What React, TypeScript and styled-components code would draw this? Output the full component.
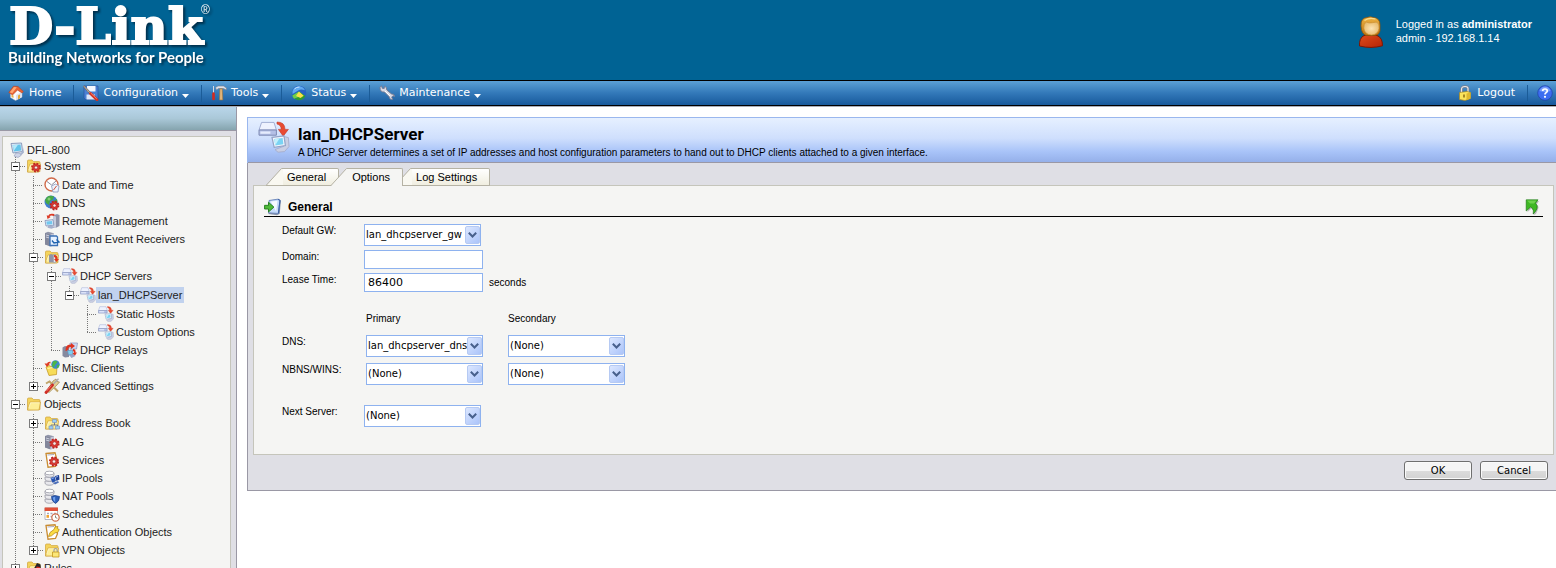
import React from "react";
import styled, { createGlobalStyle, css } from "styled-components";

const sans = '"Liberation Sans", Arial, sans-serif';
const wide = '"DejaVu Sans", Verdana, sans-serif';

const GlobalStyle = createGlobalStyle`
  * { box-sizing: border-box; }
  html, body { margin: 0; padding: 0; }
  body { background: #fff; color: #000; font: 11px/14px ${sans}; }
  button, input, select { font: inherit; color: inherit; margin: 0; }
`;

/* ---------- icon parts ---------- */

const Gear = ({ x = 10, y = 10, r = 4 }: { x?: number; y?: number; r?: number }) => (
  <g>
    <circle cx={x} cy={y} r={r} fill="none" stroke="#c02622" strokeWidth="2.200" strokeDasharray={`${r * 0.45} ${r * 0.335}`} />
    <circle cx={x} cy={y} r={r - 0.2} fill="#dd3b34" stroke="#b01c18" strokeWidth=".5" />
    <circle cx={x} cy={y} r={r * 0.42} fill="#f6ebe9" stroke="#8d1210" strokeWidth=".5" />
  </g>
);

const FolderShape = () => (
  <g stroke="#cfa23a" strokeWidth=".7">
    <path d="M1.500 14V3q0-1 1-1h3.500l1.500 1.600h5.500q1 0 1 1v9z" fill="#f4d45c" />
    <path d="M1.500 14 4 6h10.500l-1.500 8z" fill="#fdee96" />
    <path d="M2.800 12 4.500 6.800h9" fill="none" stroke="#fffbd6" />
  </g>
);

const ServerShape = () => (
  <g>
    <path d="M1 2 4 .7l6 1.500v12.300l-3 .8-6-2z" fill="#9397ab" />
    <path d="M1 2l5.500 1.500v12L1 13.500z" fill="#83879b" />
    <path d="M2 4l3.500 1M2 6l3.500 1" stroke="#d5d8e6" strokeWidth=".9" />
    <path d="M6.500 3.500 10 2.200v12.300l-3.500 1z" fill="#c5c8d8" />
  </g>
);

const MonitorShape = () => (
  <g>
    <path d="M2 1.500 12.500 1l1 8.500-9.500 1.500z" fill="#dfe7f5" stroke="#8295b8" strokeWidth=".9" />
    <path d="M3.500 3l8-.5.7 6-7.200 1z" fill="#62c4ea" />
    <path d="M3.700 3.200 9 2.700 5 8.500z" fill="#b4e9fa" />
    <path d="M13.500 2.500l1.500 8-3 3-1-2.500 3-1.500z" fill="#a7b3cf" />
    <path d="M7 11h3.500l1.500 2.500-3 2-4-1.500z" fill="#cfd5e8" stroke="#99a3c0" strokeWidth=".7" />
  </g>
);

const ServerToClient = () => (
  <g>
    <path d="M.5 4.500 1.800.7H8L9.200 4.500z" fill="#eef2fe" stroke="#a3afd4" strokeWidth=".5" />
    <path d="M.5 4.500h8.700v2.600H.5z" fill="#b4c0e6" stroke="#7e8ab4" strokeWidth=".5" />
    <path d="M1.200 5.200h5v1.200h-5z" fill="#e6ecfd" />
    <path d="M9.500.5q4 0 4 3.700h1.700L12.600 7.600 10.200 4.200h1.400q0-2.200-2.100-2.700z" fill="#e84a32" stroke="#c43a26" strokeWidth=".3" />
    <path d="M13.200 7.800l2 .5.3 4.500-2.300 2.500-3.200.3-1.500-1.300 4.500-1.700z" fill="#c9cfe4" stroke="#a3aac6" strokeWidth=".4" />
    <path d="M7 8.200l6-.7.7 4.800-5.600.9z" fill="#f3f6fd" stroke="#93a3c6" strokeWidth=".6" />
    <path d="M8 9l4.300-.5.4 3.100-4 .6z" fill="#7bd3f3" />
    <path d="M8.100 9.100l2.600-.3-2 3.200z" fill="#c2effc" />
  </g>
);

const Sheet = () => (
  <g>
    <path d="M2 1.500 11 .8l2.500 9-2 4.700-7.500.7z" fill="#fff" stroke="#c98c32" strokeWidth="1.300" />
    <path d="M3.500 3 10 2.500" stroke="#aab" strokeWidth="1" />
  </g>
);

const Discs = () => (
  <g fill="#e9e9ed" stroke="#8d8e99" strokeWidth=".7">
    <path d="M1 11v2c0 3 9 3 9 0v-2z" />
    <path d="M1 7v2c0 3 9 3 9 0V7z" />
    <path d="M1 3v2c0 3 9 3 9 0V3z" />
    <ellipse cx="5.500" cy="3" rx="4.500" ry="1.800" fill="#fff" />
  </g>
);

const icons = {
  monitor: <MonitorShape />,
  folder: <FolderShape />,
  folderGear: <g><FolderShape /><Gear x={10} y={9.5} r={3.8} /></g>,
  clock: (
    <g>
      <circle cx="7.500" cy="7.500" r="6.500" fill="#fff" stroke="#d06a4a" strokeWidth="1.400" />
      <path d="M3 4.500l4.500 3.500L12 4" fill="none" stroke="#8c8c9c" strokeWidth="1" />
      <path d="M7.500 9l4-2 3.500 2-1 6H9z" fill="#eef2fb" stroke="#8997bb" strokeWidth=".8" />
      <path d="M9.500 13l3-4" stroke="#cf5440" />
    </g>
  ),
  globeGear: (
    <g>
      <circle cx="7" cy="7" r="6.500" fill="#3f7fd0" />
      <path d="M3 2q3-2 7-.5l-1 3-3 1.500-1 4-3-2-1-3zM9 6l4-2 .5 5-3 3z" fill="#46a845" />
      <circle cx="5" cy="4" r="1.500" fill="#9be08a" opacity=".7" />
      <Gear x={10.5} y={10.5} r={3.8} />
    </g>
  ),
  remote: (
    <g>
      <path d="M9 2.500l4-1.500 2.500 1v11L11.500 15H9z" fill="#8f94aa" />
      <path d="M9 2.500l3 1V15H9z" fill="#c7cbdb" />
      <path d="M1 7.500l8-.8.8 5.500L2 13z" fill="#e9effa" stroke="#7b8db4" strokeWidth=".8" />
      <path d="M2.300 8.500l5.700-.5.500 3.300-5.700.5z" fill="#71c7ee" />
      <path d="M4 13h4.500l2 1.500-3 1.300-4-1z" fill="#a6afcb" />
      <path d="M10.500 1Q5 0 4.200 2.700L2.700 2.200 3.500 6l3.200-2-1.200-.5Q6.500 2 10 3z" fill="#dc3b26" />
    </g>
  ),
  log: (
    <g>
      <ServerShape />
      <path d="M6 5h6.500l1 1v8.500H6z" fill="#e6f1ff" stroke="#3a70b5" strokeWidth="1.300" />
      <path d="M8 9.500l2 2.500 5-1-2.500-2.500" fill="none" stroke="#1d62ad" strokeWidth="1.300" />
    </g>
  ),
  folderDhcp: (
    <g>
      <FolderShape />
      <path d="M5 6l2-1 2.500 1v7.500H5z" fill="#8f94a8" />
      <path d="M9.500 5.500h2v8h-2z" fill="#e4e7f2" stroke="#8890a8" strokeWidth=".6" />
      <path d="M10 6q4 0 3.500 4H15l-2.500 3L10 10h1.500q0-2-1.500-2z" fill="#e0371f" />
    </g>
  ),
  dhcp: <ServerToClient />,
  relay: (
    <g>
      <path d="M.5 5.500 3 4l4 1v10l-4 .5-2.500-1.500z" fill="#858a9f" />
      <path d="M8 1h7.500l-1 6H8z" fill="#ccd6f2" stroke="#8995bd" strokeWidth=".7" />
      <path d="M3.500 9Q3 2 9 2.500V1l4 3-4 3V5q-3-.2-3 3.500z" fill="#dd3522" />
      <path d="M5.500 8.500l5-.5.8 4.500-5 .5z" fill="#7bd0f2" stroke="#7488b0" strokeWidth=".8" />
      <path d="M11 7q3 0 2.500 3.500H15L12.700 14 10.500 11H12q0-2-1-2z" fill="#dd3522" />
      <path d="M7 13l5-.5 1.500 1.500-4 2z" fill="#9ba6c6" />
    </g>
  ),
  misc: (
    <g>
      <path d="M2 7l3-1.500 2 1 6-.5-.5 8.500L5 15.500z" fill="#f7dc58" stroke="#c59a28" strokeWidth=".8" />
      <path d="M3.500 8.500l8-1.500" stroke="#fff7b8" />
      <circle cx="11.500" cy="4.500" r="4.200" fill="#3d86cf" />
      <path d="M9 1.500q3-1.500 4.500.5L11 5 9.500 8 8 5.500zM13 5l2.500-.5-1 3-2 1z" fill="#4cb648" />
      <path d="M6.500 1.800Q3.500 1.500 3 3.500L.5 3.500 3 7l2.800-3L4.800 3.800Q5 3 6.500 3.500z" fill="#de3d25" />
    </g>
  ),
  advanced: (
    <g>
      <path d="M9 3l3-2 1 2.500 2.500.5-2.500 3L5 14.500 3 13z" fill="#e2cf93" stroke="#9b8452" strokeWidth=".7" />
      <path d="M2 5.500l3.500-2 3 3M10 9.500l4 4" fill="none" stroke="#bfa46a" strokeWidth="2" />
      <path d="M14.500.8 7.500 8" stroke="#a9a9ae" strokeWidth="1.300" />
      <path d="M8.500 7 2 14.500" stroke="#cf2d24" strokeWidth="2.800" strokeLinecap="round" />
      <path d="M7.500 7.500 2.500 13" stroke="#f48e80" strokeWidth=".8" />
    </g>
  ),
  folderNet: (
    <g>
      <FolderShape />
      <path d="M10.500 7v3M7 12v-2h6.500v2" fill="none" stroke="#55617d" strokeWidth=".8" />
      <path d="M8.500 4.500h4v3h-4zM5 11h4v3H5zM11.500 11h4v3h-4z" fill="#9bd0f3" stroke="#8097bd" strokeWidth=".7" />
    </g>
  ),
  alg: <g><ServerShape /><Gear x={10.5} y={9.5} r={4} /></g>,
  services: <g><Sheet /><Gear x={10} y={9.5} r={4} /></g>,
  ipPool: (
    <g>
      <Discs />
      <path d="M6.500 8l4-1.500L12 11l-3.500 1.800z" fill="#2754b0" />
      <path d="M11 6l4-1 .5 4.500-3 1.500z" fill="#1c3f94" />
      <path d="M7.500 8.700l2.500-.9M12 7l2-.5" stroke="#a8c7ff" strokeWidth=".8" />
      <path d="M9 13l5-2 1 1.500-4 2z" fill="#4c6fb9" />
    </g>
  ),
  natPool: (
    <g>
      <Discs />
      <path d="M7.500 8.500 11 7.500l4.500 1q0 5-4 7-4-2-4-7z" fill="#2c5fb8" stroke="#173c86" strokeWidth=".7" />
      <path d="M8.700 9.500l2.500-.8v5.500q-2.300-1.500-2.500-4.700z" fill="#6fa0ea" />
    </g>
  ),
  schedule: (
    <g>
      <path d="M1 2h12.500v11.500H1z" fill="#fff" stroke="#a3a3b2" strokeWidth=".8" />
      <path d="M.6 1.500H14v3.500H.6z" fill="#df5038" />
      <path d="M3 7.500h2M6.500 7.500h2M10 7.500h2M6.500 10.500h2" stroke="#a7a9ba" strokeWidth="1.300" />
      <path d="M2.500 9h2.500v2.800H2.500z" fill="#f0a22e" />
      <circle cx="11.500" cy="11.500" r="3.700" fill="#fff" stroke="#ce6a48" strokeWidth="1.200" />
      <path d="M11.500 9.500v2l1.800.8" fill="none" stroke="#665" strokeWidth=".8" />
    </g>
  ),
  auth: (
    <g>
      <Sheet />
      <path d="M4.500 12.500 6 8.500l4-3L11 3l3-.5-.8 2 2 1-1.500 3-2.700.3-3.500 3z" fill="#fbdc43" stroke="#b88a17" strokeWidth=".8" />
    </g>
  ),
  folderLock: (
    <g>
      <FolderShape />
      <path d="M10 10V8.200q0-1.700 1.600-1.700t1.600 1.700V10" fill="none" stroke="#9d9fa9" strokeWidth="1.200" />
      <path d="M8.500 10h6.500v5H8.500z" fill="#fce777" stroke="#c3981f" strokeWidth=".8" />
    </g>
  ),
  folderRules: (
    <g>
      <FolderShape />
      <path d="M11 3l3.500 1.500.5 6-5 2-2-4z" fill="#26262a" />
      <path d="M10.500 6.500l3.500.5-1 4-3-1z" fill="#d52a1f" />
    </g>
  ),
  home: (
    <g>
      <path d="M2.500 7.500v5l5 3 6.500-3.500V7L9 3.500z" fill="#fbfbfd" stroke="#b7bccb" strokeWidth=".5" />
      <path d="M8 15.300V10l6-3v5z" fill="#dde0ec" />
      <path d="M.8 7.500 5.500 1.200l4.500.3L15.300 6.500 14 8 9.500 5 4.500 10z" fill="#ea6334" stroke="#b8421e" strokeWidth=".6" />
      <path d="M1.800 7.300 6 2l2.800.3L4.300 8.300z" fill="#ffa873" />
      <path d="M3.500 9.500l2 1v2.500l-2-1z" fill="#e9b04a" />
      <path d="M10 10.500l2-1v3.700l-2 1z" fill="#e8a733" />
    </g>
  ),
  config: (
    <g>
      <path d="M1 1h14v13.500H2.500L1 13z" fill="#4a80d4" stroke="#28529c" strokeWidth=".7" />
      <path d="M4 1h8.500v5.500H4z" fill="#f5f8ff" />
      <path d="M3.500 9.500h8.500v5H3.500z" fill="#dce6f9" />
      <path d="M.5.8 7.500 8.500" stroke="#6b6b74" strokeWidth="2" />
      <path d="M1 1.300 7 8" stroke="#e1c79a" strokeWidth=".8" />
      <path d="M7.500 8.500l6.500 6.300" stroke="#d5301f" strokeWidth="2.800" strokeLinecap="round" />
      <path d="M7.700 8l6 5.800" stroke="#ff9d8c" strokeWidth=".8" />
    </g>
  ),
  tools: (
    <g>
      <path d="M2.500 1v7" stroke="#d7dae2" strokeWidth="1" />
      <path d="M2.500 8.500v5.500" stroke="#d32a20" strokeWidth="2.600" strokeLinecap="round" />
      <path d="M4.500 2.500 7 1h5.500l3 2-.3 2-2.700-1.500H7.500L5.500 5z" fill="#dfe1e8" stroke="#777c8c" strokeWidth=".6" />
      <path d="M8.800 3.800h2.500l.5 11.200H8.500z" fill="#e1b479" stroke="#99713b" strokeWidth=".6" />
    </g>
  ),
  status: (
    <g>
      <circle cx="8" cy="8" r="7.300" fill="#2763c4" />
      <path d="M1.500 6q1.500-4.500 6.500-4.800 4 0 6 4-4-1.500-6.500 0T1.500 9z" fill="#5fa9f0" />
      <path d="M3.500 4q2-2.200 5-2" stroke="#c9e6ff" strokeWidth="1" fill="none" />
      <path d="M8 6.500 14.500 11q-2.500 4.300-6.500 4.300T1.300 10.500z" fill="#2f9c30" />
      <path d="M8 6.500v5.300l-5 2Q1.500 12 1.300 10.500z" fill="#6fce4b" />
      <path d="M8 6.500l4.700 4.200L9.500 13 5 11z" fill="#f8e04a" />
    </g>
  ),
  wrench: (
    <g>
      <path d="M1 2.500 2.500.8l.8 2.500 1.900.2.3-2.300q2.500.7 2.300 3.800l4.700 4q3-.3 3 2.500l-1.500-.8-1.300 1.500 1 2q-3 1-3.700-2.700L5.500 7Q1 7.500 1 2.500z" fill="#d8dae5" stroke="#73778e" strokeWidth=".9" />
      <path d="M6 6l5 5" stroke="#fff" />
    </g>
  ),
  lock: (
    <g>
      <path d="M4.500 8V4.500Q4.500 1.500 8 1.500t3 3V7" fill="none" stroke="#787d8a" strokeWidth="2.600" />
      <path d="M4.500 8V4.500Q4.500 1.500 8 1.500t3 3V7" fill="none" stroke="#e8eaf0" strokeWidth="1.200" />
      <path d="M2.500 7.500 10 6.500l3.500 1v6L8 15.500l-5.500-1z" fill="#fbe35c" stroke="#a98720" strokeWidth=".7" />
      <path d="M9.500 8.500l4-1v6l-4 1.700z" fill="#e0b82e" />
      <path d="M7 9.500v3" stroke="#8b6a10" strokeWidth="1.500" />
    </g>
  ),
  help: (
    <g>
      <circle cx="8" cy="8" r="7.300" fill="#3c6df0" stroke="#1e3fa8" strokeWidth=".7" />
      <path d="M2.500 6Q4 1.500 8 1.500T13.500 6Q8 8 2.500 6z" fill="#8db2ff" opacity=".7" />
      <path d="M5.700 6Q5.700 4 8 4t2.300 2Q10.300 7 9 7.800 8 8.300 8 9.500" fill="none" stroke="#fff" strokeWidth="1.700" />
      <circle cx="8" cy="11.800" r="1.100" fill="#fff" />
    </g>
  ),
  section: (
    <g>
      <path d="M4.500 2 13 1l2 1.500-1 11.500-2.500 1.300-7.500-1z" fill="#8b95aa" />
      <path d="M4.500 2.200 12.500 1l1.700 1.200-1.400 11.500-8.800-.5z" fill="#c4daf8" stroke="#5e7db8" strokeWidth=".7" />
      <path d="M6 3.200l6-.8-1.200 9.500z" fill="#f5faff" />
      <path d="M12.500 1l1.700 1.200-1.400 11.500" fill="none" stroke="#3f64a8" strokeWidth="1" />
      <path d="M.5 6.500h3.500V3.800l4.800 4.300-4.800 4.300V9.800H.5z" fill="#4fb93a" stroke="#1f7c18" strokeWidth=".8" />
    </g>
  ),
  up: (
    <g>
      <path d="M2.500 2h11.500l-2.200 3.300q2.200 2 1.300 5l-2.100 4.700-2.500 1q1-3.500-1-6L6.500 9.500 2.500 13z" fill="#777" opacity=".45" />
      <path d="M1.200.8h11.800L10.500 4.300q2.500 2.200 1.500 5.200t-3.800 5.500q.8-3.700-1-5.800L5.600 8 1.200 12z" fill="#3fb824" stroke="#16700f" strokeWidth=".6" />
      <path d="M2 1.500h9.500L9 4.500 5 4.500z" fill="#6dd24c" />
    </g>
  ),
};

type IconName = keyof typeof icons;

const IconSvg = styled.svg`
  display: block;
  flex: none;
`;

const Icon = ({ name, size = 16 }: { name: IconName; size?: number }) => (
  <IconSvg width={size} height={size} viewBox="0 0 16 16" aria-hidden="true">
    {icons[name]}
  </IconSvg>
);

const UserIcon = () => (
  <IconSvg width="26" height="32" viewBox="0 0 26 32" aria-hidden="true">
    <defs>
      <linearGradient id="shirt" x1="0" y1="0" x2="1" y2="1">
        <stop offset="0" stopColor="#dd4c1c" />
        <stop offset="1" stopColor="#b52306" />
      </linearGradient>
      <linearGradient id="hair" x1="0" y1="0" x2="0" y2="1">
        <stop offset="0" stopColor="#f0b545" />
        <stop offset="1" stopColor="#b9720f" />
      </linearGradient>
      <radialGradient id="face">
        <stop offset="0" stopColor="#fbe3b4" />
        <stop offset="1" stopColor="#eabf74" />
      </radialGradient>
    </defs>
    <path d="M1.500 30Q1 22 6 19.500h13q5.500 2 5.500 10.300Q13 33 1.500 30z" fill="url(#shirt)" stroke="#7c1605" />
    <path d="M3 10Q2.500 2 9 1.500q3-1.300 6.500 0 6.500.5 6.500 7.500v6q-1 4-5 4.500H8Q3.500 18 3 10z" fill="url(#hair)" stroke="#8f560b" strokeWidth=".8" />
    <path d="M5.800 12q0-4 2.200-6 3 1.500 6.500.7 3-.7 4.500-.5 2.500 2 2 6.300-1 6-7.500 6.500-7-.5-7.700-7z" fill="url(#face)" stroke="#c98e35" strokeWidth=".6" />
    <path d="M6.500 4.500q5-3.500 11-1.500" fill="none" stroke="#fadc8c" strokeWidth="1.200" />
  </IconSvg>
);

/* ---------- header ---------- */

const Page = styled.div`
  display: flex;
  flex-direction: column;
  height: 100vh;
  overflow: hidden;
`;

const Banner = styled.header`
  display: flex;
  justify-content: space-between;
  flex: none;
  height: 80px;
  padding: 0 24px 0 8px;
  background: #006394;
  color: #fff;
`;

const Brand = styled.div`
  filter: drop-shadow(2px 2px 1px #00304c);
`;

const BrandName = styled.div`
  display: flex;
  padding: 3px 0 0 1px;
  font: bold 51px/46px "DejaVu Serif", serif;
  -webkit-text-stroke: 2px #fff;
`;

const Registered = styled.sup`
  margin-left: -2px;
  font: 12px/14px ${sans};
  -webkit-text-stroke: 0;
`;

const Tagline = styled.div`
  font: bold 15px/16px Lato, sans-serif;
`;

const Account = styled.div`
  display: flex;
  gap: 12px;
  padding-top: 16px;
`;

const AccountText = styled.p`
  margin: 1px 0 0;
  font-size: 11px;
  line-height: 14px;
`;

/* ---------- navigation bar ---------- */

const NavBar = styled.nav`
  display: flex;
  justify-content: space-between;
  flex: none;
  height: 26px;
  padding-right: 3px;
  border-top: 1px solid #000;
  border-bottom: 1px solid #000;
  background: linear-gradient(#5ba0d6, #3379b9 50%, #17599b);
`;

const NavGroup = styled.div`
  display: flex;
  align-items: center;
`;

const NavItem = styled.a<{ $first?: boolean }>`
  display: flex;
  align-items: center;
  gap: 4px;
  padding: 0 12px 0 9px;
  color: #fff;
  font: 11px/16px ${wide};
  text-decoration: none;
  & + & { border-left: 1px solid #1b5c98; }
  ${(p) => p.$first && css`
    padding-left: 8px;
    gap: 5px;
  `}
  &:last-child { padding-right: 0; }
`;

const NavText = styled.span`
  padding-bottom: 1px;
`;

const Caret = styled.svg`
  display: block;
  margin-top: 5px;
`;

const Dropdown = () => (
  <Caret width="7" height="4" viewBox="0 0 7 4" aria-hidden="true">
    <path d="M0 0h7L3.500 4z" fill="#fff" />
  </Caret>
);

/* ---------- sidebar tree ---------- */

const Columns = styled.div`
  display: flex;
  flex: 1;
  min-height: 0;
  border-top: 1px solid #a9adb8;
`;

const Sidebar = styled.aside`
  display: flex;
  flex-direction: column;
  flex: none;
  width: 237px;
  border-right: 1px solid #9a98a5;
  background: #dfdfe5;
`;

const SidebarCap = styled.div`
  flex: none;
  height: 24px;
  border-bottom: 1px solid #9a98a5;
  background: linear-gradient(#b9d6ea, #aac8d8 50%, #85a4ae);
`;

const TreePanel = styled.div`
  flex: 1;
  min-height: 0;
  margin: 5px 5px 0 2px;
  padding: 5px 0 0 6px;
  overflow: hidden;
  border: 1px solid #c5c5bb;
  border-bottom: 0;
  background: #f5f5f3;
`;

const Branch = styled.ul<{ $root?: boolean }>`
  margin: 0;
  padding: ${(p) => (p.$root ? "0 0 0 2px" : "1px 0 0 18px")};
  list-style: none;
`;

const Node = styled.li<{ $ends?: boolean; $spaced?: boolean }>`
  padding-bottom: ${(p) => (p.$spaced ? 1 : 0)}px;
  background: repeating-linear-gradient(#777 0 1px, transparent 1px 2px) 4px 0 / 1px ${(p) => (p.$ends ? "9px" : "100%")} no-repeat;
`;

const NodeRow = styled.div`
  display: flex;
  align-items: center;
  height: 18px;
`;

const Connector = styled.span<{ $leaf?: boolean }>`
  display: flex;
  align-items: center;
  width: 15px;
  padding-left: ${(p) => (p.$leaf ? 4 : 0)}px;
  &::after {
    content: "";
    flex: 1;
    height: 1px;
    margin-right: 1px;
    background: repeating-linear-gradient(90deg, #777 0 1px, transparent 1px 2px);
  }
`;

const Toggle = styled.button`
  display: block;
  width: 9px;
  height: 9px;
  padding: 0;
  border: 1px solid #7b7b7b;
  background: #fff;
  svg { display: block; }
`;

const NodeLink = styled.a<{ $active?: boolean }>`
  padding: 1px 2px;
  color: #222;
  font: 11px/14px ${sans};
  white-space: nowrap;
  text-decoration: none;
  background: ${(p) => (p.$active ? "#c1d2ee" : "none")};
`;

const RootRow = styled.div`
  display: flex;
  align-items: center;
  height: 15px;
`;

type TreeItem = {
  label: string;
  icon: IconName;
  active?: boolean;
  closed?: boolean;
  spaced?: boolean;
  items?: TreeItem[];
};

const tree: TreeItem[] = [
  {
    label: "System",
    icon: "folderGear",
    items: [
      { label: "Date and Time", icon: "clock" },
      { label: "DNS", icon: "globeGear" },
      { label: "Remote Management", icon: "remote" },
      { label: "Log and Event Receivers", icon: "log" },
      {
        label: "DHCP",
        icon: "folderDhcp",
        items: [
          {
            label: "DHCP Servers",
            icon: "dhcp",
            items: [
              {
                label: "lan_DHCPServer",
                icon: "dhcp",
                active: true,
                items: [
                  { label: "Static Hosts", icon: "dhcp" },
                  { label: "Custom Options", icon: "dhcp" },
                ],
              },
            ],
          },
          { label: "DHCP Relays", icon: "relay" },
        ],
      },
      { label: "Misc. Clients", icon: "misc" },
      { label: "Advanced Settings", icon: "advanced", closed: true },
    ],
  },
  {
    label: "Objects",
    icon: "folder",
    items: [
      { label: "Address Book", icon: "folderNet", closed: true, spaced: true },
      { label: "ALG", icon: "alg" },
      { label: "Services", icon: "services" },
      { label: "IP Pools", icon: "ipPool" },
      { label: "NAT Pools", icon: "natPool" },
      { label: "Schedules", icon: "schedule" },
      { label: "Authentication Objects", icon: "auth" },
      { label: "VPN Objects", icon: "folderLock", closed: true },
    ],
  },
  { label: "Rules", icon: "folderRules", closed: true },
];

const TreeNodes = ({ items, root }: { items: TreeItem[]; root?: boolean }) => (
  <Branch $root={root}>
    {items.map((item, i) => {
      const expandable = Boolean(item.items || item.closed);
      return (
        <Node key={item.label} $ends={!root && i === items.length - 1} $spaced={item.spaced}>
          <NodeRow>
            <Connector $leaf={!expandable}>
              {expandable && (
                <Toggle type="button" aria-label={`Toggle ${item.label}`} aria-expanded={!item.closed}>
                  <svg width="7" height="7" viewBox="0 0 7 7">
                    <path d={item.closed ? "M1 3h5v1H1zM3 1h1v5H3z" : "M1 3h5v1H1z"} fill="#000" />
                  </svg>
                </Toggle>
              )}
            </Connector>
            <Icon name={item.icon} />
            <NodeLink href="#" $active={item.active}>{item.label}</NodeLink>
          </NodeRow>
          {item.items && <TreeNodes items={item.items} />}
        </Node>
      );
    })}
  </Branch>
);

/* ---------- content ---------- */

const Main = styled.main`
  flex: 1;
  min-width: 0;
  padding: 10px 0 0 10px;
`;

const Card = styled.section`
  border: 1px solid #9a98a5;
  border-top: 0;
  border-right: 0;
  background: #dfdfe5;
`;

const CardHeader = styled.div`
  display: flex;
  gap: 8px;
  height: 46px;
  margin-left: -1px;
  padding: 3px 0 0 10px;
  border: solid #9ab7ee;
  border-width: 1px 0 0 1px;
  box-shadow: inset 0 -1px #9a98a5;
  background: linear-gradient(#e6f0ff, #cfdffd 45%, #a8c3f8 75%, #93aee8);
`;

const Title = styled.h1`
  margin: 2px 0 0;
  font: bold 17px/22px Roboto, "Arial Narrow", sans-serif;
`;

const Description = styled.p`
  margin: 0;
  font: 10px/16px ${sans};
`;

const Tabs = styled.div`
  display: flex;
  padding: 5px 0 0 18px;
`;

const TabButton = styled.button<{ $active?: boolean }>`
  display: flex;
  position: relative;
  z-index: ${(p) => (p.$active ? 2 : 0)};
  height: 18px;
  margin-bottom: -1px;
  padding: 0;
  border: 0;
  background: none;
  font: 11px/17px ${sans};
  & + & { margin-left: -8px; }
`;

const TabFace = styled.span<{ $active?: boolean }>`
  height: 18px;
  padding: 0 12px 0 4px;
  border: solid #b5b2a4;
  border-width: 1px 1px ${(p) => (p.$active ? 0 : 1)}px 0;
  border-top-right-radius: 2px;
  background: ${(p) => (p.$active ? "#f5f5f3" : "linear-gradient(#fff, #f0eee0)")};
`;

const Tab = ({ label, active }: { label: string; active?: boolean }) => (
  <TabButton type="button" role="tab" aria-selected={Boolean(active)} $active={active}>
    <IconSvg width="17" height="18" viewBox="0 0 17 18" aria-hidden="true">
      <path d="M0 18 15.500.5H17V18z" fill={active ? "#f5f5f3" : "#f9f8f1"} />
      <path d="M0 17.500 15.500.5H17" fill="none" stroke="#b5b2a4" />
      {!active && <path d="M0 17.500h17" stroke="#b5b2a4" />}
    </IconSvg>
    <TabFace $active={active}>{label}</TabFace>
  </TabButton>
);

const FormPanel = styled.form`
  display: block;
`;

const FormBody = styled.div`
  margin: 0 2px 0 5px;
  padding: 11px 10px 27px;
  border: 1px solid #c5c5bb;
  background: #f5f5f3;
`;

const SectionHead = styled.div`
  display: flex;
  align-items: center;
  gap: 6px;
  height: 20px;
  padding-right: 2px;
  border-bottom: 1px solid #000;
`;

const SectionTitle = styled.h2`
  flex: 1;
  margin: 0;
  font: bold 12px/16px ${sans};
`;

const Field = styled.div<{ $gap?: number }>`
  display: flex;
  margin: ${(p) => p.$gap ?? 4}px 0 0 18px;
`;

const FieldLabel = styled.label`
  width: 82px;
  font: 10px/14px ${sans};
`;

const TextInput = styled.input`
  width: 119px;
  height: 19px;
  padding: 0 3px;
  border: 1px solid #8eb2ef;
  background: #fff;
  font: 11px/16px ${wide};
`;

const Unit = styled.span`
  padding: 3px 0 0 6px;
  font: 10px/14px ${sans};
`;

const SelectWrap = styled.span`
  display: block;
  position: relative;
  width: 117px;
`;

const SelectBox = styled.select`
  display: block;
  appearance: none;
  width: 117px;
  height: 22px;
  padding: 0 15px 0 1px;
  overflow: hidden;
  border: 1px solid #8eb2ef;
  border-radius: 0;
  background: #fff;
  font: 10px/16px ${wide};
`;

const SelectArrow = styled.span`
  position: absolute;
  top: 2px;
  right: 1px;
  display: grid;
  place-items: center;
  width: 15px;
  height: 18px;
  border: 1px solid #b6caf3;
  border-radius: 2px;
  background: linear-gradient(135deg, #dce7ff, #abc4fa);
  pointer-events: none;
`;

const Select = ({ id, value, label }: { id: string; value: string; label?: string }) => (
  <SelectWrap>
    <SelectBox id={id} defaultValue={value} aria-label={label}>
      <option value={value}>{value}</option>
    </SelectBox>
    <SelectArrow>
      <svg width="9" height="6" viewBox="0 0 9 6" aria-hidden="true">
        <path d="M.8.8l3.700 3.700L8.200.8" fill="none" stroke="#48608c" strokeWidth="2" />
      </svg>
    </SelectArrow>
  </SelectWrap>
);

const ServerTable = styled.table`
  margin: 20px 0 0 18px;
  border-collapse: collapse;
  th, td { padding: 0; text-align: left; vertical-align: top; }
  thead th { height: 23px; font: 10px/14px ${sans}; }
  tbody tr + tr > * { padding-top: 6px; }
  tbody th { width: 84px; font: 10px/14px ${sans}; }
  tbody td { width: 142px; }
`;

const Actions = styled.div`
  display: flex;
  justify-content: flex-end;
  gap: 8px;
  padding: 6px 8px 10px;
`;

const ActionButton = styled.button`
  width: 68px;
  height: 19px;
  padding: 0;
  border: 1px solid #6f6f6f;
  border-radius: 3px;
  box-shadow: inset 0 0 0 1px #fafafa;
  background: linear-gradient(#f5f5f5 50%, #dcdcdc 50%, #d2d2d2);
  font: 10px/16px ${wide};
`;

export default function App() {
  return (
    <Page>
      <GlobalStyle />
      <Banner>
        <Brand>
          <BrandName>D-Link<Registered>®</Registered></BrandName>
          <Tagline>Building Networks for People</Tagline>
        </Brand>
        <Account>
          <UserIcon />
          <AccountText>
            Logged in as <b>administrator</b>
            <br />
            admin - 192.168.1.14
          </AccountText>
        </Account>
      </Banner>

      <NavBar>
        <NavGroup>
          <NavItem href="#" $first><Icon name="home" /><NavText>Home</NavText></NavItem>
          <NavItem href="#"><Icon name="config" /><NavText>Configuration</NavText><Dropdown /></NavItem>
          <NavItem href="#"><Icon name="tools" /><NavText>Tools</NavText><Dropdown /></NavItem>
          <NavItem href="#"><Icon name="status" /><NavText>Status</NavText><Dropdown /></NavItem>
          <NavItem href="#"><Icon name="wrench" /><NavText>Maintenance</NavText><Dropdown /></NavItem>
        </NavGroup>
        <NavGroup>
          <NavItem href="#"><Icon name="lock" /><NavText>Logout</NavText></NavItem>
          <NavItem href="#" aria-label="Help"><Icon name="help" /></NavItem>
        </NavGroup>
      </NavBar>

      <Columns>
        <Sidebar>
          <SidebarCap />
          <TreePanel>
            <RootRow>
              <Icon name="monitor" />
              <NodeLink href="#">DFL-800</NodeLink>
            </RootRow>
            <TreeNodes items={tree} root />
          </TreePanel>
        </Sidebar>

        <Main>
          <Card>
            <CardHeader>
              <Icon name="dhcp" size={32} />
              <div>
                <Title>lan_DHCPServer</Title>
                <Description>
                  A DHCP Server determines a set of IP addresses and host configuration parameters to hand out to DHCP clients attached to a given interface.
                </Description>
              </div>
            </CardHeader>

            <Tabs role="tablist">
              <Tab label="General" />
              <Tab label="Options" active />
              <Tab label="Log Settings" />
            </Tabs>

            <FormPanel onSubmit={(e) => e.preventDefault()}>
              <FormBody>
                <SectionHead>
                  <Icon name="section" size={18} />
                  <SectionTitle>General</SectionTitle>
                  <Icon name="up" />
                </SectionHead>

                <Field $gap={7}>
                  <FieldLabel htmlFor="gateway">Default GW:</FieldLabel>
                  <Select id="gateway" value="lan_dhcpserver_gw" />
                </Field>
                <Field>
                  <FieldLabel htmlFor="domain">Domain:</FieldLabel>
                  <TextInput id="domain" type="text" />
                </Field>
                <Field>
                  <FieldLabel htmlFor="lease">Lease Time:</FieldLabel>
                  <TextInput id="lease" type="text" defaultValue="86400" />
                  <Unit>seconds</Unit>
                </Field>

                <ServerTable>
                  <thead>
                    <tr>
                      <td />
                      <th scope="col">Primary</th>
                      <th scope="col">Secondary</th>
                    </tr>
                  </thead>
                  <tbody>
                    <tr>
                      <th scope="row">DNS:</th>
                      <td><Select id="dns1" value="lan_dhcpserver_dns1" label="Primary DNS" /></td>
                      <td><Select id="dns2" value="(None)" label="Secondary DNS" /></td>
                    </tr>
                    <tr>
                      <th scope="row">NBNS/WINS:</th>
                      <td><Select id="wins1" value="(None)" label="Primary NBNS/WINS" /></td>
                      <td><Select id="wins2" value="(None)" label="Secondary NBNS/WINS" /></td>
                    </tr>
                  </tbody>
                </ServerTable>

                <Field $gap={20}>
                  <FieldLabel htmlFor="next">Next Server:</FieldLabel>
                  <Select id="next" value="(None)" />
                </Field>
              </FormBody>

              <Actions>
                <ActionButton type="submit">OK</ActionButton>
                <ActionButton type="button">Cancel</ActionButton>
              </Actions>
            </FormPanel>
          </Card>
        </Main>
      </Columns>
    </Page>
  );
}
